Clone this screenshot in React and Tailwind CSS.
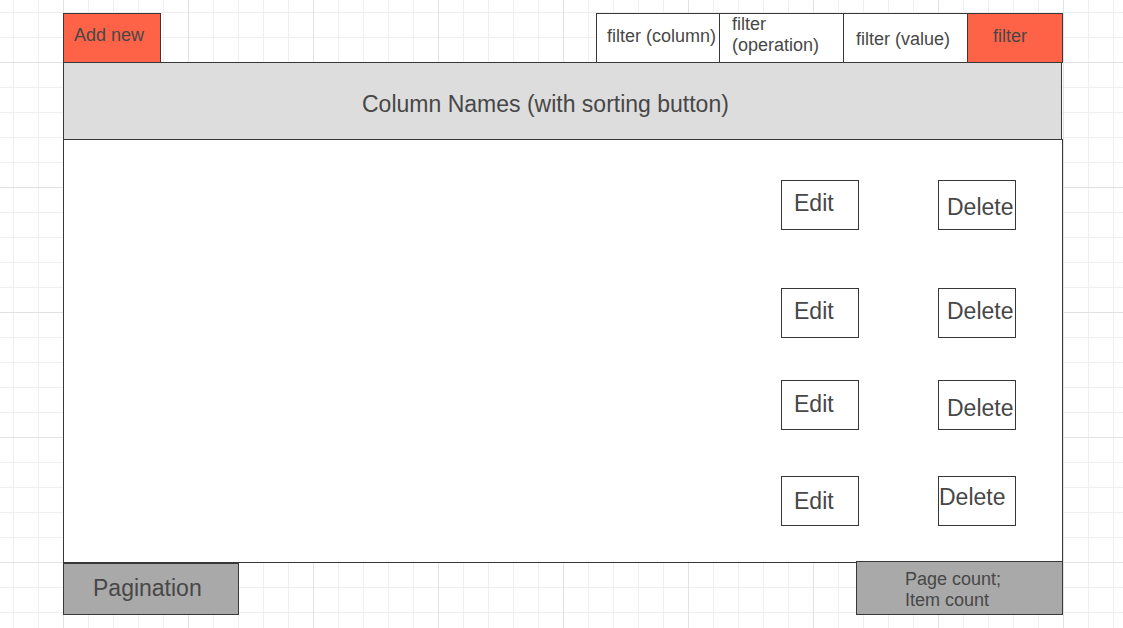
const rows = [
  { mt: "", edit: "pt-[11px]", del: "pl-[8px] pt-[15px]" },
  { mt: "mt-[58px]", edit: "pt-[11px]", del: "pl-[8px] pt-[11px]" },
  { mt: "mt-[42px]", edit: "pt-[12px]", del: "pl-[8px] pt-[16px]" },
  { mt: "mt-[46px]", edit: "pt-[13px]", del: "pl-0 pt-[9px]" },
];

const gridBg =
  "[background-image:linear-gradient(#e2e2e2_1px,transparent_1px),linear-gradient(to_right,#e2e2e2_1px,transparent_1px),linear-gradient(#efefef_1px,transparent_1px),linear-gradient(to_right,#efefef_1px,transparent_1px)] [background-size:125px_125px,125px_125px,25px_25px,25px_25px] [background-position:63px_62px,63px_62px,13px_12px,13px_12px]";

const RowButton = ({ label, pad }) => (
  <div
    className={`w-[78px] h-[50px] border border-[#383838] bg-white text-[23px] leading-[22px] whitespace-nowrap ${pad}`}
  >
    {label}
  </div>
);

const App = () => {
  return (
    <div
      className={`w-[1123px] h-[628px] overflow-hidden bg-white text-[#474747] font-['Liberation_Sans',Arial,sans-serif] ${gridBg}`}
    >
      <div className="pt-[13px] pl-[63px]">
        <div className="w-[1000px]">
          {/* toolbar */}
          <div className="flex justify-between h-[50px]">
            <div className="w-[98px] h-[50px] border border-[#383838] bg-[#ff6347] pl-[10px] pt-[12px] text-[18px] leading-[18px] whitespace-nowrap">
              Add new
            </div>
            <div className="flex">
              <div className="w-[124px] h-[50px] border border-[#383838] bg-white pl-[10px] pt-[13px] text-[18px] leading-[18px] whitespace-nowrap">
                filter (column)
              </div>
              <div className="-ml-px w-[125px] h-[50px] border border-[#383838] bg-white pl-[12px] text-[18px] leading-[21px]">
                filter
                <br />
                (operation)
              </div>
              <div className="-ml-px w-[125px] h-[50px] border border-[#383838] bg-white pl-[12px] pt-[16px] text-[18px] leading-[18px] whitespace-nowrap">
                filter (value)
              </div>
              <div className="-ml-px w-[96px] h-[50px] border border-[#383838] bg-[#ff6347] pl-[25px] pt-[13px] text-[18px] leading-[18px]">
                filter
              </div>
            </div>
          </div>

          {/* column header */}
          <div className="-mt-px w-[999px] h-[78px] border border-[#383838] bg-[#dddddd] pl-[298px] pt-[30px] text-[23px] leading-[23px] whitespace-nowrap">
            Column Names (with sorting button)
          </div>

          {/* rows */}
          <div className="-mt-px w-[1000px] h-[424px] border border-[#383838] bg-white pl-[717px] pt-[40px]">
            {rows.map((row, idx) => (
              <div key={"row" + idx} className={`flex gap-[79px] ${row.mt}`}>
                <RowButton label="Edit" pad={`pl-[12px] ${row.edit}`} />
                <RowButton label="Delete" pad={row.del} />
              </div>
            ))}
          </div>

          {/* footer */}
          <div className="flex justify-between items-start">
            <div className="w-[176px] h-[52px] border border-[#383838] bg-[#a9a9a9] pl-[29px] pt-[13px] text-[23px] leading-[22px]">
              Pagination
            </div>
            <div className="-mt-[2px] w-[207px] h-[54px] border border-[#383838] bg-[#a9a9a9] pl-[48px] pt-[7px] text-[18px] leading-[21px]">
              Page count;
              <br />
              Item count
            </div>
          </div>
        </div>
      </div>
    </div>
  );
};

export default App;
